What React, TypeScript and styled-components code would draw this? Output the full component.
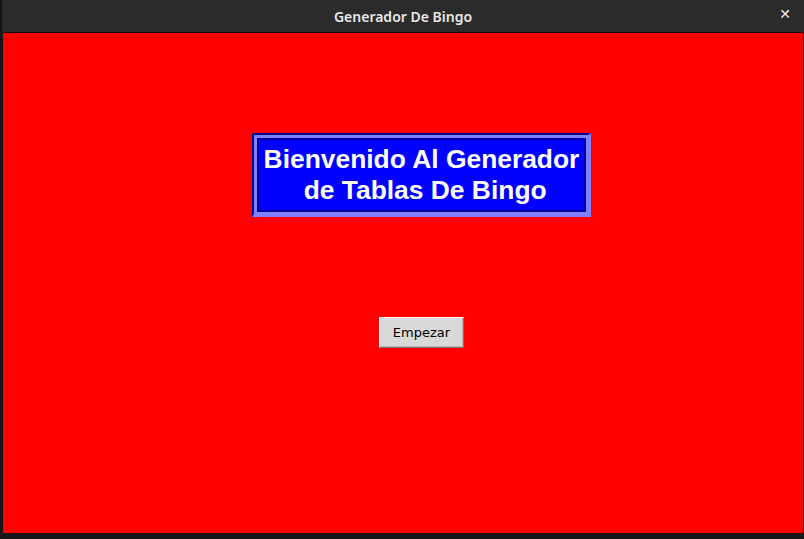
import React from "react";
import styled, { createGlobalStyle } from "styled-components";

const Global = createGlobalStyle`
  html, body { margin: 0; padding: 0; background: #151515; overflow: hidden; }
  #root { width: 804px; height: 539px; }
`;

const Window = styled.div`
  width: 804px;
  height: 539px;
  display: flex;
  flex-direction: column;
  background: #151515;
`;

const TitleBar = styled.div`
  height: 32px;
  margin-left: 2px;
  background: #2b2b2b;
  border-bottom: 1px solid #0c0c0c;
  display: flex;
  align-items: center;
  justify-content: center;
  position: relative;
  font-family: "Noto Sans", "DejaVu Sans", sans-serif;
  font-size: 14px;
  font-weight: 600;
  color: #e8e8e8;
`;

const CloseBtn = styled.span`
  position: absolute;
  right: 13px;
  top: 6px;
  font-family: "DejaVu Sans", sans-serif;
  font-size: 14px;
  font-weight: 700;
  color: #f0f0f0;
`;

const Canvas = styled.div`
  margin-left: 3px;
  width: 800px;
  height: 500px;
  background: #ff0000;
  display: flex;
  flex-direction: column;
  align-items: center;
  box-sizing: border-box;
  padding-top: 100px;
  padding-left: 37px;
  gap: 100px;
`;

const dark = "#00009a";
const light = "#8080ff";

const BevelOuter = styled.div`
  border-style: solid;
  border-width: 2px 3px 3px 2px;
  border-color: ${dark} ${light} ${light} ${dark};
`;

const BevelMiddle = styled.div`
  border-style: solid;
  border-width: 3px 2px 2px 3px;
  border-color: ${light};
`;

const BevelInner = styled.div`
  border-style: solid;
  border-width: 2px;
  border-color: ${dark};
  background: #0000ff;
  width: 325px;
  box-sizing: content-box;
  padding: 4px 0 4px;
  text-align: center;
  font-family: "Liberation Sans", Arial, sans-serif;
  font-weight: 700;
  font-size: 26.4px;
  line-height: 31px;
  color: #ffffff;
`;

const Button = styled.button`
  width: 85px;
  height: 31px;
  box-sizing: border-box;
  background: #d9d9d9;
  border-style: solid;
  border-width: 1px;
  border-color: #ffffff #7a7a7a #7a7a7a #ffffff;
  box-shadow: inset -1px -1px 0 #b5b5b5;
  font-family: "DejaVu Sans", sans-serif;
  font-size: 13px;
  color: #000;
  padding: 0;
  cursor: pointer;
`;

const Bottom = styled.div`
  flex: 1;
  background: #151515;
`;

export default function App() {
  return (
    <>
      <Global />
      <Window>
        <TitleBar>
          Generador De Bingo
          <CloseBtn>✕</CloseBtn>
        </TitleBar>
        <Canvas>
          <BevelOuter>
            <BevelMiddle>
              <BevelInner>
                Bienvenido Al Generador
                <br />
                &nbsp;de Tablas De Bingo
              </BevelInner>
            </BevelMiddle>
          </BevelOuter>
          <Button>Empezar</Button>
        </Canvas>
        <Bottom />
      </Window>
    </>
  );
}
